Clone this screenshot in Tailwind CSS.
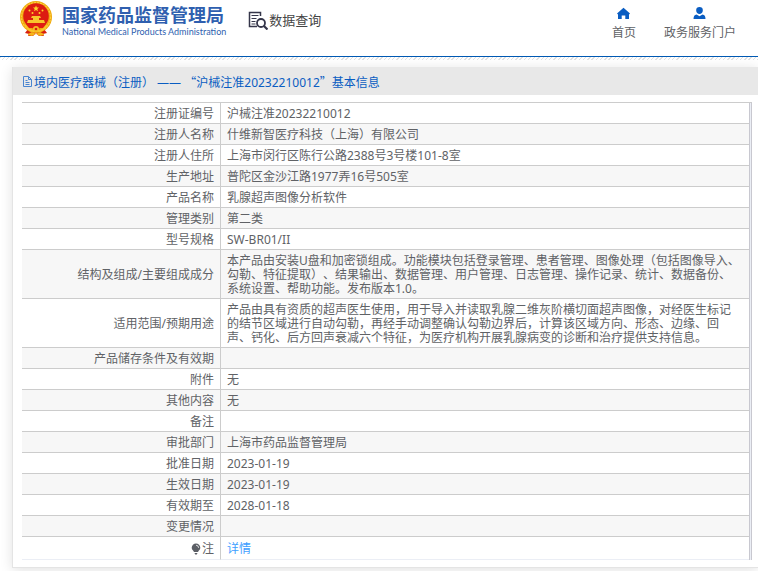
<!DOCTYPE html>
<html lang="zh-CN">

<head>
    <meta charset="UTF-8" />
    <meta name="viewport" content="width=device-width, initial-scale=1" />
    <title>国家药品监督管理局 数据查询</title>
    <script src="https://cdn.jsdelivr.net/npm/@tailwindcss/browser@4"></script>
</head>

<body class="bg-white font-['Noto_Sans','Noto_Sans_CJK_SC',sans-serif] text-xs text-[#606266] [text-spacing-trim:space-all]">
    <!-- Site header -->
    <header class="flex h-[57px] items-start justify-between border-b border-[#0059b3] pl-5 pr-[22px]">
        <div class="flex items-start gap-[22px]">
            <a href="#" class="flex items-start gap-[10px]">
                <!-- National emblem -->
                <svg class="mt-px h-9 w-8" viewBox="0 0 32 36" aria-hidden="true">
                    <path d="M8 28 5 32l4 1-1 2h5l3-3 3 3h5l-1-2 4-1-3-4z" fill="#d8200f" />
                    <path d="M8 33l4-2 4 2 4-2 4 2v1l-4 1-4-2-4 2-4-1z" fill="#f6b51c" />
                    <ellipse cx="16" cy="16" rx="16" ry="16" fill="#f0a80f" />
                    <ellipse cx="16" cy="16" rx="14.5" ry="14.5" fill="none" stroke="#fbd03c" stroke-width="1.2" stroke-dasharray="2 1" />
                    <circle cx="16" cy="15" r="12.8" fill="#dc1c12" />
                    <path d="m16 4.6.9 2h2.1l-1.700 1.400.7 2.200-2-1.300-2 1.300.7-2.200L13 6.600h2.100z" fill="#ffd52b" />
                    <g fill="#ffd02b">
                        <circle cx="9.500" cy="9.500" r="1" />
                        <circle cx="22.500" cy="9.500" r="1" />
                        <circle cx="12.500" cy="12" r="1" />
                        <circle cx="19.500" cy="12" r="1" />
                    </g>
                    <path d="M12 15h8l1 2h-2v2h5l1 3H7l1-3h5v-2h-2z" fill="#f9c52c" />
                    <path d="M6 23h20l-3 4H9z" fill="#e01c12" />
                    <circle cx="16" cy="28" r="3" fill="#f6bb25" />
                    <circle cx="16" cy="28" r="1.300" fill="#d8200f" />
                    <path d="M5 24c3 5 6 6 9 6M27 24c-3 5-6 6-9 6" fill="none" stroke="#f9c52c" stroke-width="1.500" />
                </svg>
                <span class="flex flex-col pt-[5px] text-[#2f5faf]">
                    <span class="text-lg leading-5 font-bold">国家药品监督管理局</span>
                    <span class="font-[Lato,sans-serif] text-[9px] leading-[14px] font-normal">National Medical Products Administration</span>
                </span>
            </a>
            <a href="#" class="flex items-center gap-px pt-[10px] text-[#444]">
                <svg class="h-5 w-5" viewBox="0 0 20 20" fill="none" stroke="#35364a" aria-hidden="true">
                    <path d="M12.500 6V2.500H1.500v14H9" stroke-width="1.500" />
                    <path d="M3.500 5.500h7M3.500 8.500h5M3.500 11.500h4M3.500 14h4" stroke-width="1.200" />
                    <circle cx="13" cy="13" r="4" stroke-width="1.800" />
                    <path d="m16 16 3.500 3.500" stroke-width="2.200" />
                </svg>
                <span class="text-[13px] leading-5">数据查询</span>
            </a>
        </div>
        <nav class="flex gap-7 pt-[7px] leading-4">
            <a href="#" class="flex flex-col items-center gap-[5px]">
                <svg class="h-[13px] w-[13px]" viewBox="0 0 13 13" fill="#0a5dc2" aria-hidden="true">
                    <path d="M6.500.8 13 6.500l-1 1V12H8.300V8.500H4.700V12H1V7.500l-1-1z" />
                </svg>
                首页
            </a>
            <a href="#" class="flex flex-col items-center gap-[5px]">
                <svg class="h-[13px] w-[13px]" viewBox="0 0 13 13" fill="#0a5dc2" aria-hidden="true">
                    <path d="M6.500 0a3.300 3.300 0 0 1 3.300 3.500C9.800 5.600 8.300 7 6.500 7S3.200 5.600 3.200 3.500A3.300 3.300 0 0 1 6.500 0zM3.500 7.500l3 1.700 3-1.700c2 .4 3 1.700 3 4.500H.5c0-2.800 1-4.100 3-4.500z" />
                </svg>
                政务服务门户
            </a>
        </nav>
    </header>
    <div class="h-[3px] bg-[repeating-linear-gradient(135deg,#e2e2e2_0_1px,#fff_1px_3px)]"></div>

    <!-- Record detail -->
    <main class="pt-[7px] pb-1 pl-3">
        <section class="border-b border-l border-[#e4e4e4] bg-white pb-[7px] shadow-[0_2px_12px_rgba(0,0,0,0.12)]">
            <h1 class="flex h-7 items-center bg-[#e8e8e8] pt-[2px] pl-[9px] text-[#0a5dc2]">
                <svg class="h-3 w-3" viewBox="0 0 12 12" fill="none" stroke="#4a85d0" aria-hidden="true">
                    <path d="M1.500.5h5l3 3v7h-8zM6.500.5v3h3M3.500 4.500h2M3.500 6.500h4M3.500 8.500h4" />
                </svg>
                <span>境内医疗器械（注册） —— <span class="font-['Noto_Sans_CJK_SC',sans-serif]">“</span>沪械注准20232210012<span class="font-['Noto_Sans_CJK_SC',sans-serif]">”</span>基本信息</span>
            </h1>
            <div class="mt-[7px] mr-[6px] ml-[9px] border-t border-r border-t-[#ccc] border-r-[#c8c8d0] bg-[#ebeef5] pr-px">
                <table class="w-full border-separate border-spacing-0 border-r border-[#c8c8d0] bg-white leading-[14px] [&_td]:h-[21px] [&_td]:border-b [&_td]:border-l [&_td]:border-[#ccc] [&_td]:pt-1 [&_td]:pr-2 [&_td]:pb-[2px] [&_td]:pl-[6px] [&_th]:w-[198px] [&_th]:border-b [&_th]:border-[#ccc] [&_th]:pt-1 [&_th]:pr-[6px] [&_th]:pb-[2px] [&_th]:text-right [&_th]:font-normal [&_tr:last-child>*]:border-b-[#ebeef5] [&_tr:nth-child(even)]:bg-[#f7f7f7]">
                    <tbody>
                        <tr><th scope="row">注册证编号</th><td>沪械注准20232210012</td></tr>
                        <tr><th scope="row">注册人名称</th><td>什维新智医疗科技（上海）有限公司</td></tr>
                        <tr><th scope="row">注册人住所</th><td>上海市闵行区陈行公路2388号3号楼101-8室</td></tr>
                        <tr><th scope="row">生产地址</th><td>普陀区金沙江路1977弄16号505室</td></tr>
                        <tr><th scope="row">产品名称</th><td>乳腺超声图像分析软件</td></tr>
                        <tr><th scope="row">管理类别</th><td>第二类</td></tr>
                        <tr><th scope="row">型号规格</th><td>SW-BR01/II</td></tr>
                        <tr><th scope="row">结构及组成/主要组成成分</th><td>本产品由安装U盘和加密锁组成。功能模块包括登录管理、患者管理、图像处理（包括图像导入、勾勒、特征提取）、结果输出、数据管理、用户管理、日志管理、操作记录、统计、数据备份、系统设置、帮助功能。发布版本1.0。</td></tr>
                        <tr><th scope="row">适用范围/预期用途</th><td>产品由具有资质的超声医生使用，用于导入并读取乳腺二维灰阶横切面超声图像，对经医生标记的结节区域进行自动勾勒，再经手动调整确认勾勒边界后，计算该区域方向、形态、边缘、回声、钙化、后方回声衰减六个特征，为医疗机构开展乳腺病变的诊断和治疗提供支持信息。</td></tr>
                        <tr><th scope="row">产品储存条件及有效期</th><td></td></tr>
                        <tr><th scope="row">附件</th><td>无</td></tr>
                        <tr><th scope="row">其他内容</th><td>无</td></tr>
                        <tr><th scope="row">备注</th><td></td></tr>
                        <tr><th scope="row">审批部门</th><td>上海市药品监督管理局</td></tr>
                        <tr><th scope="row">批准日期</th><td>2023-01-19</td></tr>
                        <tr><th scope="row">生效日期</th><td>2023-01-19</td></tr>
                        <tr><th scope="row">有效期至</th><td>2028-01-18</td></tr>
                        <tr><th scope="row">变更情况</th><td></td></tr>
                        <tr>
                            <th scope="row">
                                <span class="flex h-4 items-center justify-end">
                                    <svg class="h-3 w-3" viewBox="0 0 12 12" aria-hidden="true">
                                        <path d="M6 .5a4.300 4.300 0 0 1 4.300 4.300C10.300 7 8.500 7.500 8 9H4C3.500 7.500 1.700 7 1.700 4.800A4.300 4.300 0 0 1 6 .5zM4.500 10h3l-.7 1.500H5.200z" fill="#5c5f66" />
                                        <path d="M6 2.200a2.700 2.700 0 0 1 2.600 2.600" fill="none" stroke="#fff" stroke-width=".8" />
                                    </svg>
                                    注
                                </span>
                            </th>
                            <td><a href="#" class="text-[#409eff]">详情</a></td>
                        </tr>
                    </tbody>
                </table>
            </div>
        </section>
    </main>
</body>

</html>
